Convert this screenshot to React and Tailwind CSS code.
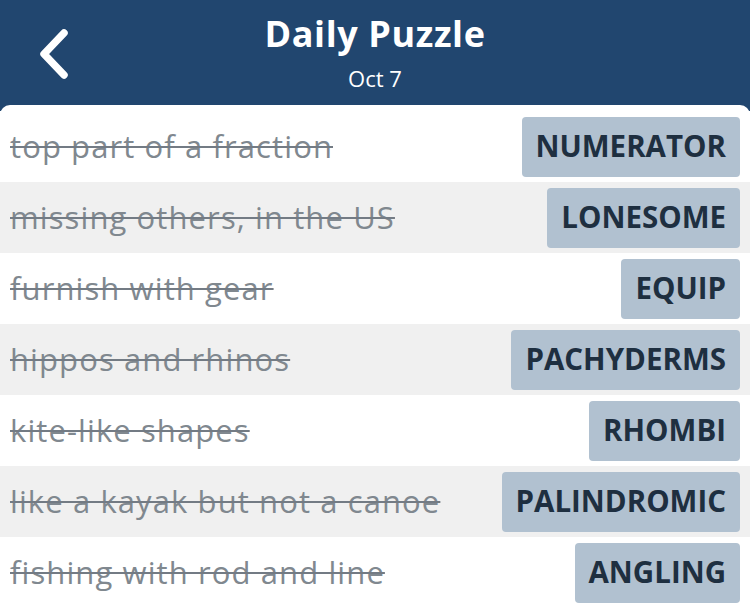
const clues = [
  { clue: "top part of a fraction", answer: "NUMERATOR" },
  { clue: "missing others, in the US", answer: "LONESOME" },
  { clue: "furnish with gear", answer: "EQUIP" },
  { clue: "hippos and rhinos", answer: "PACHYDERMS" },
  { clue: "kite-like shapes", answer: "RHOMBI" },
  { clue: "like a kayak but not a canoe", answer: "PALINDROMIC" },
  { clue: "fishing with rod and line", answer: "ANGLING" },
];

function BackIcon() {
  return (
    <svg width="34" height="52" viewBox="0 0 34 52" fill="none">
      <path
        d="M28 5 L8 26 L28 47"
        stroke="#fff"
        strokeWidth="7.5"
        strokeLinecap="round"
        strokeLinejoin="round"
      />
    </svg>
  );
}

export default function App() {
  return (
    <div
      className="w-[750px] h-[613px] overflow-hidden bg-[#21466f] flex flex-col"
      style={{ fontFamily: "'Open Sans', Lato, sans-serif" }}
    >
      <div className="h-[105px] shrink-0 relative flex flex-col items-center pt-[13px]">
        <div className="absolute left-[36px] top-[28px]">
          <BackIcon />
        </div>
        <div className="text-white font-bold text-[36px] leading-[42px] tracking-[0.6px]">
          Daily Puzzle
        </div>
        <div className="text-white text-[22px] leading-[26px] mt-[10px]">Oct 7</div>
      </div>
      <div className="flex-1 bg-white rounded-t-[10px] pt-[6px] flex flex-col">
        {clues.map((c, i) => (
          <div
            key={c.answer}
            className={`h-[71px] shrink-0 flex items-center justify-between pl-[10px] pr-[10px] ${
              i % 2 === 1 ? "bg-[#f0f0f0]" : "bg-white"
            }`}
          >
            <span className="text-[31px] tracking-[1.1px] text-[#80888f] line-through decoration-[2px] decoration-[#737b84]">
              {c.clue}
            </span>
            <span className="h-[60px] flex items-center px-[14px] rounded-[4px] bg-[#b1c1d0] text-[#1e2f40] font-bold text-[29.5px]">
              {c.answer}
            </span>
          </div>
        ))}
      </div>
    </div>
  );
}
